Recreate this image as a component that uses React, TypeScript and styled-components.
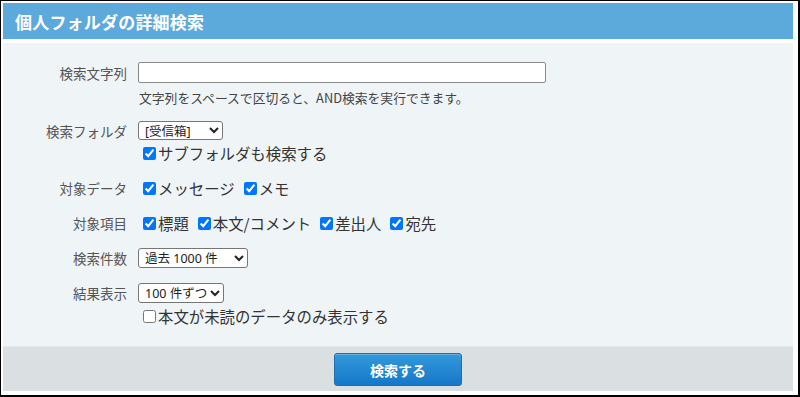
import React from 'react';
import styled, { createGlobalStyle } from 'styled-components';

const GlobalStyle = createGlobalStyle`
    html, body {
        margin: 0;
        padding: 0;
        background: #ffffff;
    }
    body {
        font-family: 'Noto Sans CJK JP', 'Noto Sans', sans-serif;
    }
`;

const Frame = styled.div`
    box-sizing: border-box;
    width: 800px;
    height: 397px;
    border-style: solid;
    border-color: #000;
    border-width: 1px 2px 2px 1px;
    padding: 2px 5px 4px 2px;
    display: flex;
    flex-direction: column;
    background: #fff;
`;

const Header = styled.div`
    height: 36px;
    background: #5ca9db;
    color: #fff;
    font-size: 17px;
    font-weight: 700;
    display: flex;
    align-items: center;
    padding-left: 12px;
    letter-spacing: 0.2px;
`;

const Panel = styled.div`
    margin-top: 4px;
    height: 303px;
    box-sizing: border-box;
    background: #eff4f7;
    padding-top: 19px;
    display: flex;
    flex-direction: column;
`;

const Row = styled.div<{ gap?: number }>`
    display: grid;
    grid-template-columns: 124px 1fr;
    column-gap: 11px;
    align-items: start;
    margin-bottom: ${(p) => (p.gap !== undefined ? p.gap : 15)}px;
`;

const Label = styled.div<{ top?: number }>`
    text-align: right;
    font-size: 13.5px;
    line-height: 20px;
    color: #555;
    padding-top: ${(p) => p.top || 0}px;
`;

const Field = styled.div`
    display: flex;
    flex-direction: column;
    align-items: flex-start;
`;

const TextInput = styled.input`
    box-sizing: border-box;
    width: 408px;
    height: 21px;
    border: 1px solid #8a8a8a;
    border-radius: 2px;
    background: #fff;
    margin: 0;
`;

const Hint = styled.div`
    font-size: 12.8px;
    line-height: 16px;
    color: #444;
    margin-top: 7px;
    margin-left: 1px;
`;

const Select = styled.select<{ w: number; h?: number }>`
    box-sizing: border-box;
    width: ${(p) => p.w}px;
    height: ${(p) => p.h || 19}px;
    font-family: 'Noto Sans', 'Noto Sans CJK JP', sans-serif;
    font-size: 12.5px;
    line-height: 16px;
    color: #222;
    border: 1px solid #767676;
    border-radius: 3px;
    background: #fff;
    margin: 0;
    padding: 0 0 0 2px;
`;

const Checks = styled.div<{ top?: number }>`
    display: flex;
    align-items: center;
    column-gap: 4px;
    margin-top: ${(p) => p.top || 0}px;
`;

const Check = styled.label`
    display: flex;
    align-items: center;
    font-size: 15.4px;
    line-height: 18px;
    color: #333;
    white-space: nowrap;
`;

const Box = styled.input`
    width: 13px;
    height: 13px;
    margin: 0 2px 0 5px;
`;

const Footer = styled.div`
    flex: 1;
    background: #dadfe2;
    border-top: 1px solid #e4e8ea;
    display: flex;
    justify-content: center;
    align-items: center;
`;

const SearchButton = styled.button`
    width: 128px;
    height: 33px;
    border: 1px solid #1f6fae;
    border-radius: 3px;
    background: linear-gradient(#3399db, #1578c8);
    color: #fff;
    font-family: 'Noto Sans CJK JP', sans-serif;
    font-size: 14px;
    font-weight: 700;
    box-shadow: inset 0 1px 0 rgba(255, 255, 255, 0.25);
    margin-top: 1px;
`;

function CheckItem(props: { label: string; checked?: boolean }) {
    return (
        <Check>
            <Box type="checkbox" defaultChecked={props.checked} />
            {props.label}
        </Check>
    );
}

export default function App() {
    return (
        <>
            <GlobalStyle />
            <Frame>
                <Header>個人フォルダの詳細検索</Header>
                <Panel>
                    <Row gap={15}>
                        <Label top={1}>検索文字列</Label>
                        <Field>
                            <TextInput type="text" />
                            <Hint>文字列をスペースで区切ると、AND検索を実行できます。</Hint>
                        </Field>
                    </Row>
                    <Row gap={16}>
                        <Label top={-3}>検索フォルダ</Label>
                        <Field>
                            <Select w={85} h={19}>
                                <option>[受信箱]</option>
                            </Select>
                            <Checks top={4}>
                                <CheckItem label="サブフォルダも検索する" checked />
                            </Checks>
                        </Field>
                    </Row>
                    <Row gap={15}>
                        <Label>対象データ</Label>
                        <Checks top={1}>
                            <CheckItem label="メッセージ" checked />
                            <CheckItem label="メモ" checked />
                        </Checks>
                    </Row>
                    <Row gap={15}>
                        <Label>対象項目</Label>
                        <Checks top={1}>
                            <CheckItem label="標題" checked />
                            <CheckItem label="本文/コメント" checked />
                            <CheckItem label="差出人" checked />
                            <CheckItem label="宛先" checked />
                        </Checks>
                    </Row>
                    <Row gap={15}>
                        <Label>検索件数</Label>
                        <Field>
                            <Select w={110} h={20}>
                                <option>過去 1000 件</option>
                            </Select>
                        </Field>
                    </Row>
                    <Row gap={0}>
                        <Label top={-2}>結果表示</Label>
                        <Field>
                            <Select w={86} h={20}>
                                <option>100 件ずつ</option>
                            </Select>
                            <Checks top={4}>
                                <CheckItem label="本文が未読のデータのみ表示する" />
                            </Checks>
                        </Field>
                    </Row>
                </Panel>
                <Footer>
                    <SearchButton>検索する</SearchButton>
                </Footer>
            </Frame>
        </>
    );
}
